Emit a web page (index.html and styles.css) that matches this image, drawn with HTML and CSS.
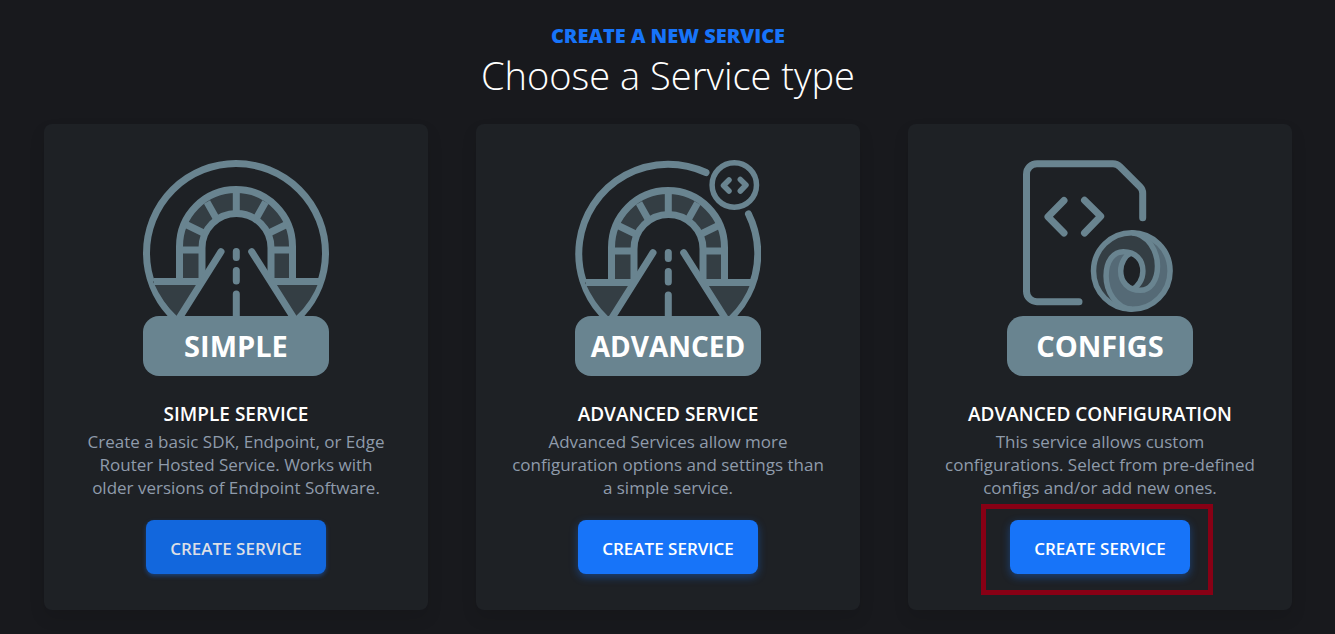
FILE: index.html
```html
<!DOCTYPE html>
<html lang="en">
<head>
    <meta charset="UTF-8">
    <meta name="viewport" content="width=device-width, initial-scale=1.0">
    <title>Create a New Service</title>
    <link rel="stylesheet" href="styles.css">
</head>
<body>
    <!-- Tunnel drawing shared by the simple and advanced cards -->
    <svg class="sprite" aria-hidden="true">
        <symbol id="tunnel" viewBox="0 0 186 156">
            <path class="fill-dark" d="M36.500 121.500V86a56.500 56.500 0 0 1 113 0v35.500H127.500V88a34.500 34.500 0 0 0-69 0v33.500z"/>
            <path class="fill-dark" d="M10 121.500H57L35 157Q20 144 10 121.500zM130 121.500h46Q168 143 152 157z"/>
            <g class="line">
                <path d="M36.500 121.500V86.500a56.500 57 0 0 1 113 0v35"/>
                <path d="M59 121.500V88a34.500 34.500 0 0 1 69 0v33.500"/>
                <path d="M36.500 90H59M128 90h21.500M93.300 30v24M64 42l9 16M122.500 42l-9 16M42 64l18.500 9M144.500 64L126 73"/>
                <path d="M11 121.500h47M129 121.500h47"/>
            </g>
            <g class="line round">
                <path d="M78 91.700L35 160M108.700 91.700L152 160"/>
                <path d="M93.300 91.500v6M93.300 110.500v10.500M93.300 134v26"/>
            </g>
        </symbol>
    </svg>

    <main class="page">
        <header class="page-header">
            <div class="eyebrow">Create a New Service</div>
            <h1>Choose a Service type</h1>
        </header>

        <div class="cards">
            <section class="card">
                <div class="art">
                    <svg viewBox="0 0 186 156" aria-hidden="true">
                        <circle class="line" cx="93" cy="93" r="89.500"/>
                        <use href="#tunnel" width="186" height="156"/>
                    </svg>
                    <div class="plate plate-lg">SIMPLE</div>
                </div>
                <h2>Simple Service</h2>
                <p>Create a basic SDK, Endpoint, or Edge Router Hosted Service. Works with older versions of Endpoint Software.</p>
                <div class="action">
                    <button type="button" class="create-btn active">Create Service</button>
                </div>
            </section>

            <section class="card">
                <div class="art">
                    <svg viewBox="0 0 186 156" aria-hidden="true">
                        <path class="line round" d="M131 12.500A89.500 89.500 0 1 0 173.500 54"/>
                        <use href="#tunnel" y="1" width="186" height="156"/>
                        <circle class="line badge" cx="159.300" cy="25" r="22.200"/>
                        <path class="line round badge" d="M154 20l-5.500 5.500 5.500 5.500M165.300 19.500l5.700 5.500-5.700 6"/>
                    </svg>
                    <div class="plate">ADVANCED</div>
                </div>
                <h2>Advanced Service</h2>
                <p>Advanced Services allow more configuration options and settings than a simple service.</p>
                <div class="action">
                    <button type="button" class="create-btn">Create Service</button>
                </div>
            </section>

            <section class="card">
                <div class="art">
                    <svg viewBox="0 0 186 156" aria-hidden="true">
                        <path class="line round" d="M72 141.700H30a10.500 10.500 0 0 1-10.500-10.500V14.200A10.500 10.500 0 0 1 30 3.700h76q4 0 7 3l20 20q2.700 2.700 2.700 6.500v24.500"/>
                        <path class="line round" d="M57 40.500L41 56.700 57 73M77.500 40.300L93.700 56.300 77.500 73"/>
                        <!-- JSON ring -->
                        <circle class="fill-dark" cx="124.800" cy="111" r="38.300"/>
                        <path class="fill-mid" d="M124.800 72.700C141 74 150.500 91 150.500 106C150.500 121 143 130.300 133.300 130.300C121 130.300 113.700 122 113.700 111C113.700 103 118 95.500 124.800 92.500C122 91.700 119 91.700 116.300 91.700C106.600 91.700 99.100 101 99.100 116C99.100 131 108.600 148 124.800 149.300A38.300 38.300 0 0 0 124.800 72.700z"/>
                        <path class="hole" d="M124.800 93C118 96 114 103 114 111s4 15 10.800 18C131.600 126 135.600 119 135.600 111s-4-15-10.800-18z"/>
                        <g class="line ring">
                            <path d="M124.800 72.700C141 74 150.500 91 150.500 106C150.500 121 143 130.300 133.300 130.300C121 130.300 113.700 122 113.700 111C113.700 103 118 95.500 124.800 92.500"/>
                            <path d="M124.800 149.300C108.600 148 99.100 131 99.100 116C99.100 101 106.600 91.700 116.300 91.700C128.600 91.700 135.900 100 135.900 111C135.900 119 131.600 126.500 124.800 129.500"/>
                            <circle cx="124.800" cy="111" r="38.300"/>
                        </g>
                    </svg>
                    <div class="plate plate-lg">CONFIGS</div>
                </div>
                <h2>Advanced Configuration</h2>
                <p>This service allows custom configurations. Select from pre-defined configs and/or add new ones.</p>
                <div class="action highlight">
                    <button type="button" class="create-btn">Create Service</button>
                </div>
            </section>
        </div>
    </main>
</body>
</html>
```

FILE: styles.css
```css
* {
    box-sizing: border-box;
}
body {
    margin: 0;
    background: #18191d;
    color: #fff;
    font-family: 'Open Sans', sans-serif;
}
.sprite {
    position: absolute;
    width: 0;
    height: 0;
}
.page {
    padding: 24px 43px 24px 44px;
}
.page-header {
    text-align: center;
    margin-bottom: 22px;
}
.eyebrow {
    color: #1774f9;
    font-size: 20px;
    font-weight: 800;
    line-height: 24px;
    text-transform: uppercase;
}
h1 {
    margin: 0;
    font-size: 38px;
    font-weight: 300;
    line-height: 54px;
}
.cards {
    display: grid;
    grid-template-columns: repeat(3, 1fr);
    gap: 48px;
}
.card {
    display: flex;
    flex-direction: column;
    align-items: center;
    padding: 36px 32px;
    background: #1e2125;
    border-radius: 8px;
    box-shadow: 0 8px 16px rgba(0, 0, 0, 0.1);
    text-align: center;
}
.art {
    width: 186px;
    margin-bottom: 24px;
}
.art svg {
    display: block;
    width: 100%;
}
.plate {
    height: 60px;
    border-radius: 16px;
    background: #698490;
    font-size: 28px;
    font-weight: 700;
    line-height: 60px;
}
.plate-lg {
    font-size: 29px;
}
.line {
    fill: none;
    stroke: #698490;
    stroke-width: 7;
}
.round {
    stroke-linecap: round;
    stroke-linejoin: round;
}
.badge {
    stroke-width: 5.5;
}
.ring {
    stroke-width: 5.5;
}
.fill-dark {
    fill: #343e44;
}
.fill-mid {
    fill: #556a76;
}
.hole {
    fill: #1e2125;
}
.card h2 {
    margin: 0;
    font-size: 19px;
    font-weight: 600;
    line-height: 28px;
    text-transform: uppercase;
}
.card p {
    margin: 2px 0 21px;
    max-width: 316px;
    color: #8f9bab;
    font-size: 17px;
    line-height: 23px;
}
.action {
    position: relative;
}
.create-btn {
    width: 180px;
    height: 54px;
    padding: 2px 0 0;
    border: none;
    border-radius: 8px;
    background: #1774f9;
    box-shadow: 0 3px 8px rgba(23, 116, 249, 0.4);
    color: #fff;
    font-family: inherit;
    font-size: 17px;
    font-weight: 600;
    text-transform: uppercase;
    cursor: pointer;
}
.create-btn.active,
.create-btn:hover {
    background: #1267dd;
    box-shadow: 0 2px 4px rgba(23, 116, 249, 0.4);
    color: #dcdfe6;
}
/* frame drawn around the button */
.highlight::after {
    content: '';
    position: absolute;
    inset: -16px -23px -21px -29px;
    border: 5px solid #880015;
    pointer-events: none;
}
@media (max-width: 900px) {
    .cards {
        grid-template-columns: 1fr;
    }
}
```
